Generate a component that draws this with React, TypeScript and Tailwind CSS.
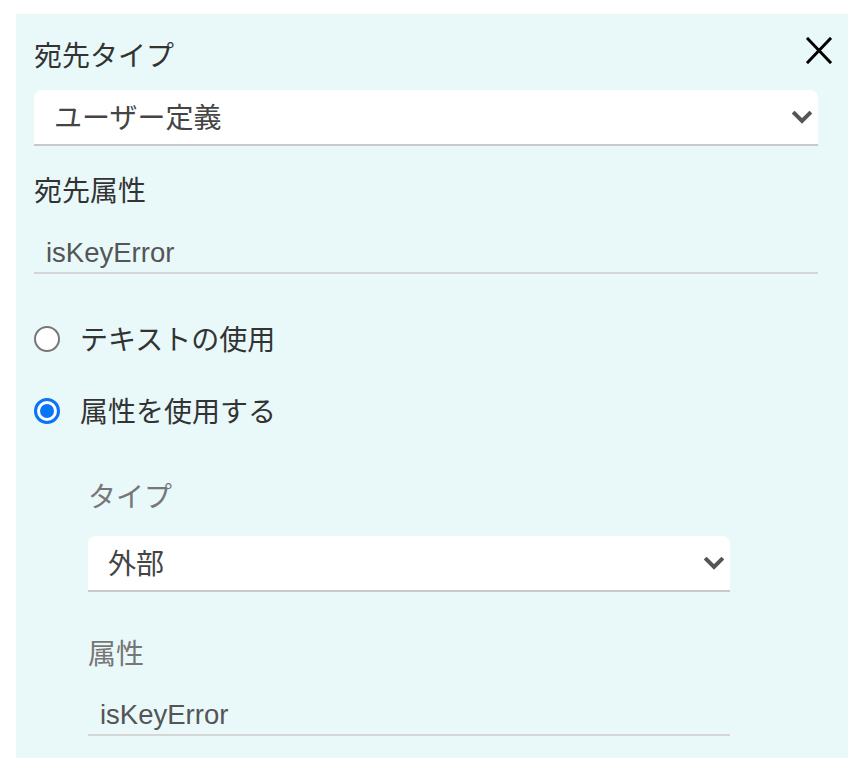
import React from "react";

const font = { fontFamily: '"Liberation Sans", "Noto Sans CJK JP", sans-serif' };

function Chevron() {
  return (
    <svg width="20" height="13" viewBox="0 0 20 13" className="shrink-0">
      <path d="M2.5 2.5 L10 10 L17.5 2.5" fill="none" stroke="#555" strokeWidth="4" strokeLinecap="square" />
    </svg>
  );
}

function Select({ value }: { value: string }) {
  return (
    <div className="h-[56px] bg-white rounded-t-[8px] border-b-2 border-[#c9c9c9] flex items-center justify-between pl-[20px] pr-[6px]">
      <span className="text-[28px] text-[#444] translate-y-[2px]">{value}</span>
      <Chevron />
    </div>
  );
}

function Input({ value }: { value: string }) {
  return (
    <div className="h-[42px] border-b-2 border-[#d6d6d6] flex items-center pl-[12px]">
      <span className="text-[27.5px] leading-[40px] text-[#555] translate-y-[1px]">{value}</span>
    </div>
  );
}

export default function App() {
  return (
    <div className="w-[862px] h-[772px] bg-white pt-[14px] pl-[16px]" style={font}>
      <div className="relative w-[832px] h-[744px] bg-[#e9f9fa] pt-[21px] pl-[18px] pr-[30px]">
        <button className="absolute top-[23px] right-[16px] w-[26px] h-[27px]">
          <svg width="26" height="27" viewBox="0 0 26 27">
            <path d="M2 2 L24 25 M24 2 L2 25" stroke="#000" strokeWidth="3" strokeLinecap="square" />
          </svg>
        </button>

        <div className="h-[40px] pt-[2px] leading-[40px] text-[28px] text-[#333]">宛先タイプ</div>
        <div className="mt-[15px]">
          <Select value="ユーザー定義" />
        </div>

        <div className="mt-[24px] h-[40px] pt-[2px] leading-[40px] text-[28px] text-[#333]">宛先属性</div>
        <div className="mt-[22px]">
          <Input value="isKeyError" />
        </div>

        <div className="mt-[45px] h-[40px] flex items-center gap-[20px]">
          <span className="w-[26px] h-[26px] rounded-full border-2 border-[#777] bg-white" />
          <span className="text-[28px] leading-[40px] text-[#333] translate-y-[2px]">テキストの使用</span>
        </div>

        <div className="mt-[32px] h-[40px] flex items-center gap-[20px]">
          <span className="w-[26px] h-[26px] rounded-full border-[3px] border-[#0a74f7] bg-white flex items-center justify-center">
            <span className="w-[14px] h-[14px] rounded-full bg-[#0a74f7]" />
          </span>
          <span className="text-[28px] leading-[40px] text-[#333] translate-y-[2px]">属性を使用する</span>
        </div>

        <div className="pl-[54px] pr-[88px]">
          <div className="mt-[45px] h-[40px] pt-[2px] leading-[40px] text-[28px] text-[#777]">タイプ</div>
          <div className="mt-[20px]">
            <Select value="外部" />
          </div>
          <div className="mt-[41px] h-[40px] pt-[2px] leading-[40px] text-[28px] text-[#777]">属性</div>
          <div className="mt-[21px]">
            <Input value="isKeyError" />
          </div>
        </div>
      </div>
    </div>
  );
}
